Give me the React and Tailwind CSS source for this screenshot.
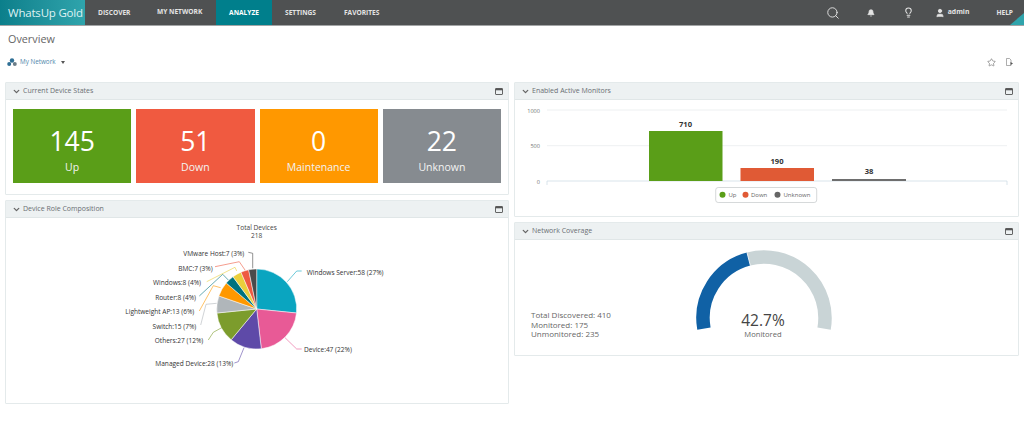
import React from 'react';
import { ChevronDown, Search, Bell, Lightbulb, User, Star } from 'lucide-react';

const PIE_CX = 256.7;
const PIE_CY = 309;
const PIE_R = 40;

const slices = [
  { value: 58, color: '#0aa5c0' },
  { value: 47, color: '#e85a96' },
  { value: 28, color: '#5e4aa8' },
  { value: 27, color: '#7c9c2c' },
  { value: 15, color: '#b0b6ba' },
  { value: 13, color: '#ff9800' },
  { value: 8, color: '#00727f' },
  { value: 8, color: '#eacf3c' },
  { value: 7, color: '#ee5a42' },
  { value: 7, color: '#4a4a4a' },
];

const pieLabels = [
  { text: 'Windows Server:58 (27%)', x: 306.7, y: 272.3, anchor: 'start', color: '#0aa5c0', line: '287.3,281.7 296.7,271 301.7,271' },
  { text: 'Device:47 (22%)', x: 304, y: 349.7, anchor: 'start', color: '#e85a96', line: '285,337.7 296.7,349 301.7,349' },
  { text: 'Managed Device:28 (13%)', x: 233.3, y: 363, anchor: 'end', color: '#5e4aa8', line: '244,347.7 238.3,361.7 234.3,363' },
  { text: 'Others:27 (12%)', x: 203.3, y: 340.7, anchor: 'end', color: '#7c9c2c', line: '221.7,327.7 213.3,332.3 208.3,340' },
  { text: 'Switch:15 (7%)', x: 196.3, y: 326, anchor: 'end', color: '#b0b6ba', line: '216.7,303.3 206,304.3 200.7,325' },
  { text: 'Lightweight AP:13 (6%)', x: 194.3, y: 311.7, anchor: 'end', color: '#ff9800', line: '220.7,287.7 213.3,285.7 199.3,311' },
  { text: 'Router:8 (4%)', x: 196, y: 297, anchor: 'end', color: '#00727f', line: '228.3,280 222.7,274.3 199.3,296' },
  { text: 'Windows:8 (4%)', x: 201, y: 282.7, anchor: 'end', color: '#eacf3c', line: '236.7,271 235,267.3 206.7,281.7' },
  { text: 'BMC:7 (3%)', x: 212.7, y: 268, anchor: 'end', color: '#ee5a42', line: '245,270 239.3,261.7 215,266.7' },
  { text: 'VMware Host:7 (3%)', x: 244.3, y: 253.7, anchor: 'end', color: '#4a4a4a', line: '252.7,268.3 252.7,253.3 248.3,252.3' },
];

const tiles = [
  { value: '145', label: 'Up', bg: 'bg-[#5a9e18]' },
  { value: '51', label: 'Down', bg: 'bg-[#f05a40]' },
  { value: '0', label: 'Maintenance', bg: 'bg-[#ff9800]' },
  { value: '22', label: 'Unknown', bg: 'bg-[#868b90]' },
];

const slicePath = (startFrac, endFrac) => {
  const a0 = startFrac * 2 * Math.PI;
  const a1 = endFrac * 2 * Math.PI;
  const x0 = PIE_CX + PIE_R * Math.sin(a0);
  const y0 = PIE_CY - PIE_R * Math.cos(a0);
  const x1 = PIE_CX + PIE_R * Math.sin(a1);
  const y1 = PIE_CY - PIE_R * Math.cos(a1);
  const large = endFrac - startFrac > 0.5 ? 1 : 0;
  return `M${PIE_CX} ${PIE_CY}L${x0} ${y0}A${PIE_R} ${PIE_R} 0 ${large} 1 ${x1} ${y1}Z`;
};

// icono de ventana en la cabecera de cada panel
const WindowIcon = () => (
  <svg width="8" height="7" viewBox="0 0 8 7" className="text-[#555]">
    <rect x="0.5" y="0.5" width="7" height="6" rx="0.5" fill="none" stroke="currentColor" strokeWidth="0.9" />
    <rect x="0.5" y="0.5" width="7" height="1.8" fill="currentColor" />
  </svg>
);

const Panel = ({ title, className, children }) => (
  <div className={`border border-[#e4eaeb] bg-white rounded-[1px] ${className}`}>
    <div className="flex items-center justify-between h-[17px] bg-[#edf1f2] border-b border-[#e0e6e7] pl-[6px] pr-[5px]">
      <div className="flex items-center gap-[2px]">
        <ChevronDown size={9} strokeWidth={3.5} className="text-[#666]" />
        <span className="text-[7px] text-[#6a6f72]">{title}</span>
      </div>
      <WindowIcon />
    </div>
    {children}
  </div>
);

const NavItem = ({ children, className = '' }) => (
  <div className={`text-[6.6px] font-bold text-[#e4e4e4] whitespace-nowrap ${className}`}>{children}</div>
);

const PieChart = () => {
  let acc = 0;
  return (
    <svg viewBox="6 218 501 185" className="w-[501px] h-[185px] block">
      {slices.map((s) => {
        const start = acc / 218;
        acc += s.value;
        return <path key={s.color} d={slicePath(start, acc / 218)} fill={s.color} stroke="#fff" strokeWidth="0.5" />;
      })}
      {pieLabels.map((l) => (
        <g key={l.text}>
          <polyline points={l.line} fill="none" stroke={l.color} strokeWidth="0.6" />
          <text x={l.x} y={l.y + 2.5} textAnchor={l.anchor} fontSize="6.55" fill="#333">{l.text}</text>
        </g>
      ))}
      <text x={PIE_CX} y={229.5} textAnchor="middle" fontSize="6.55" fill="#444">Total Devices</text>
      <text x={PIE_CX} y={238} textAnchor="middle" fontSize="6.55" fill="#444">218</text>
    </svg>
  );
};

const BarChart = () => (
  <svg viewBox="515 100 503 115" className="w-[503px] h-[115px] block">
    <line x1="547" x2="1007" y1="110" y2="110" stroke="#e8ecee" strokeWidth="0.8" />
    <line x1="547" x2="1007" y1="145.7" y2="145.7" stroke="#e8ecee" strokeWidth="0.8" />
    <path d="M547 185V181H1007V185" fill="none" stroke="#cfdde6" strokeWidth="0.8" />
    <text x="540" y="112.5" textAnchor="end" fontSize="5.6" fill="#777">1000</text>
    <text x="540" y="148" textAnchor="end" fontSize="5.6" fill="#777">500</text>
    <text x="540" y="183.5" textAnchor="end" fontSize="5.6" fill="#777">0</text>
    <rect x="649" y="131" width="73.5" height="50" fill="#5a9e18" />
    <rect x="740.5" y="168" width="73.5" height="13" fill="#e05a35" />
    <rect x="832" y="179" width="74" height="2" fill="#6e6e6e" />
    <text x="685.5" y="126.5" textAnchor="middle" fontSize="7.6" fontWeight="700" fill="#333">710</text>
    <text x="777" y="163.5" textAnchor="middle" fontSize="7.6" fontWeight="700" fill="#333">190</text>
    <text x="869" y="174" textAnchor="middle" fontSize="7.6" fontWeight="700" fill="#333">38</text>
    <rect x="715.7" y="187.5" width="101" height="15" rx="2.5" fill="#fff" stroke="#c4c8ca" strokeWidth="0.7" />
    <circle cx="722.5" cy="194.8" r="3" fill="#5a9e18" />
    <text x="728.5" y="197" fontSize="6" fill="#666">Up</text>
    <circle cx="745.5" cy="194.8" r="3" fill="#e05a35" />
    <text x="751" y="197" fontSize="6" fill="#666">Down</text>
    <circle cx="777.5" cy="194.8" r="3" fill="#666" />
    <text x="783.5" y="197" fontSize="6" fill="#666">Unknown</text>
  </svg>
);

const gaugePoint = (frac) => {
  // el arco cubre 200 grados, de -10 a 190
  const deg = -10 + 200 * frac;
  const rad = (deg * Math.PI) / 180;
  return [68 - 61 * Math.cos(rad), 68 - 61 * Math.sin(rad)];
};

const Gauge = () => {
  const [sx, sy] = gaugePoint(0);
  const [mx, my] = gaugePoint(0.427);
  const [ex, ey] = gaugePoint(1);
  return (
    <svg viewBox="0 0 136 92" className="w-[136px] h-[92px] block">
      <path d={`M${mx} ${my}A61 61 0 0 1 ${ex} ${ey}`} fill="none" stroke="#c9d4d6" strokeWidth="13.5" />
      <path d={`M${sx} ${sy}A61 61 0 0 1 ${mx} ${my}`} fill="none" stroke="#1061a5" strokeWidth="13.5" />
      <line x1={68 - 54 * Math.cos(1.316)} y1={68 - 54 * Math.sin(1.316)} x2={68 - 68 * Math.cos(1.316)} y2={68 - 68 * Math.sin(1.316)} stroke="#fff" strokeWidth="0.8" />
      <text x="67" y="75.5" textAnchor="middle" fontSize="15.5" fill="#444">42.7%</text>
      <text x="67" y="87" textAnchor="middle" fontSize="7.6" fill="#666">Monitored</text>
    </svg>
  );
};

export default function App() {
  return (
    <div className="w-[1024px] h-[430px] overflow-hidden bg-white font-['Open_Sans',sans-serif]">
      {/* Barra superior */}
      <div className="relative flex items-center h-[26px] bg-[#4f5152] border-b border-[#a3a5a6]">
        <div className="flex items-center w-[85px] h-full pl-[8px] bg-gradient-to-r from-[#0b7f8b] to-[#2fa4ac] text-[11.5px] whitespace-nowrap text-[#dff2f3] tracking-[-0.2px]">
          WhatsUp Gold
        </div>
        <NavItem className="ml-[13px] w-[59px] pt-[1px]">DISCOVER</NavItem>
        <NavItem className="w-[59px] pb-[2px]">MY NETWORK</NavItem>
        <div className="flex items-center justify-center w-[56px] h-full bg-[#007f8c]">
          <NavItem className="text-white">ANALYZE</NavItem>
        </div>
        <NavItem className="ml-[13px] w-[59px] pt-[1px]">SETTINGS</NavItem>
        <NavItem className="pt-[1px]">FAVORITES</NavItem>
        <div className="ml-auto flex items-center pr-[11px] text-[#e4e4e4]">
          <Search size={14} strokeWidth={1.6} className="mr-[27px]" />
          <Bell size={8} fill="currentColor" className="mr-[28px]" />
          <Lightbulb size={11} strokeWidth={2.2} className="mr-[21px]" />
          <User size={10} fill="currentColor" className="mr-[3px]" />
          <span className="text-[6.8px] font-bold mr-[27px]">admin</span>
          <span className="text-[6.6px] font-bold">HELP</span>
        </div>
        <div className="absolute right-0 bottom-0 w-0 h-0 border-b-[12px] border-b-[#2fa4ac] border-l-[14px] border-l-transparent" />
      </div>

      {/* Titulo */}
      <div className="pl-[8px] pt-[5px] text-[10.8px] leading-[16px] text-[#666]">Overview</div>

      {/* Selector de red */}
      <div className="flex items-center justify-between h-[12px] mt-[9px] pl-[7px] pr-[11px]">
        <div className="flex items-center">
          <svg width="10" height="9" viewBox="0 0 10 9" className="mr-[3px]">
            <circle cx="5" cy="2.5" r="2.2" fill="#2f6f95" />
            <circle cx="2.2" cy="6" r="2" fill="#2f6f95" />
            <circle cx="7.8" cy="6" r="2" fill="#6b7d88" />
          </svg>
          <span className="text-[6.3px] text-[#4f86ab]">My Network</span>
          <span className="ml-[5px] w-0 h-0 border-x-[2.5px] border-x-transparent border-t-[3px] border-t-[#555]" />
        </div>
        <div className="flex items-center gap-[10px] text-[#555]">
          <Star size={9} strokeWidth={1.4} />
          <svg width="7" height="8" viewBox="0 0 7 8">
            <path d="M0.5 0.5H3.5L5 2V7.5H0.5Z" fill="none" stroke="#777" strokeWidth="0.6" />
            <path d="M4.5 4L7 5.5L4.5 7Z" fill="#555" />
          </svg>
        </div>
      </div>

      {/* Contenido */}
      <div className="flex gap-[5px] pl-[5px] mt-[14px]">
        <div className="flex flex-col gap-[5px] w-[504px]">
          <Panel title="Current Device States" className="h-[113px]">
            <div className="grid grid-cols-4 gap-[5px] pl-[7px] pr-[7px] pt-[9px]">
              {tiles.map((t) => (
                <div key={t.label} className={`flex flex-col items-center h-[74px] text-white ${t.bg}`}>
                  <div className="mt-[17px] text-[26.5px] leading-[30px]">{t.value}</div>
                  <div className="mt-[4px] text-[10.5px] leading-[14px] text-[#f3f3f3]">{t.label}</div>
                </div>
              ))}
            </div>
          </Panel>
          <Panel title="Device Role Composition" className="h-[204px]">
            <PieChart />
          </Panel>
        </div>
        <div className="flex flex-col gap-[5px] w-[505px]">
          <Panel title="Enabled Active Monitors" className="h-[135px]">
            <BarChart />
          </Panel>
          <Panel title="Network Coverage" className="h-[134px]">
            <div className="relative flex items-end h-[115px]">
              <div className="pl-[16px] pb-[16px] text-[8px] leading-[9.7px] text-[#666]">
                <div>Total Discovered: 410</div>
                <div>Monitored: 175</div>
                <div>Unmonitored: 235</div>
              </div>
              <div className="ml-[85px] pb-[13px]">
                <Gauge />
              </div>
            </div>
          </Panel>
        </div>
      </div>
    </div>
  );
}
